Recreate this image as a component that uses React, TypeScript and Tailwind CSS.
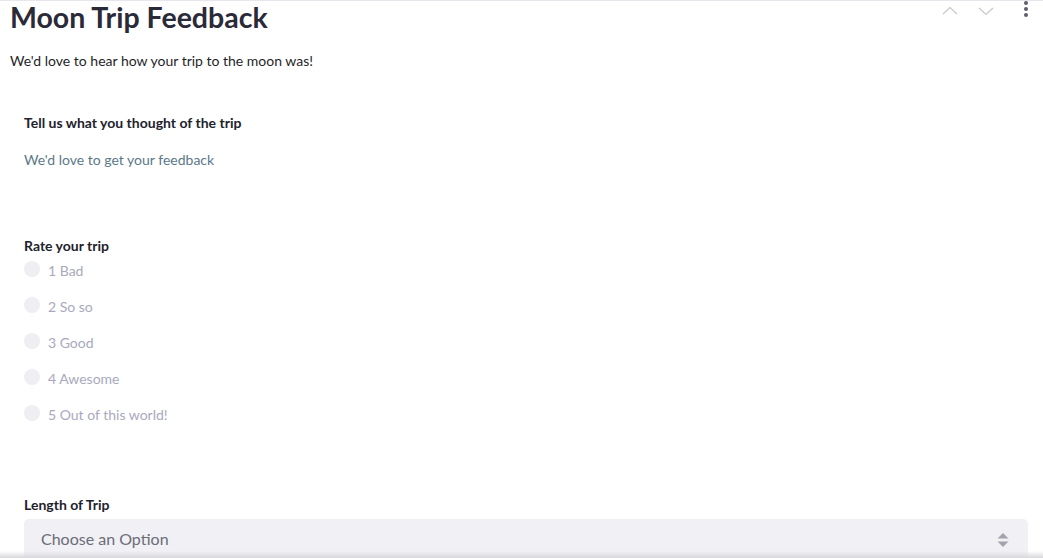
const ratings = ['1 Bad', '2 So so', '3 Good', '4 Awesome', '5 Out of this world!'];

export default function App() {
  return (
    <div
      className="relative h-[558px] w-[1043px] overflow-hidden bg-white border-t border-[#e6e6ec] text-[#262730]"
      style={{ fontFamily: 'Lato, "Open Sans", sans-serif' }}
    >
      {/* toolbar */}
      <div className="absolute right-0 top-0 flex items-start pr-[15px]">
        <svg width="16" height="10" viewBox="0 0 16 10" className="mt-[5px]" fill="none" stroke="#c8c8d0" strokeWidth="1.2">
          <path d="M1 8 L8 1.5 L15 8" />
        </svg>
        <svg width="16" height="10" viewBox="0 0 16 10" className="ml-[20px] mt-[5px]" fill="none" stroke="#c8c8d0" strokeWidth="1.2">
          <path d="M1 2 L8 8.5 L15 2" />
        </svg>
        <div className="ml-[30px] flex flex-col gap-[2px]">
          <span className="h-[4px] w-[4px] rounded-full bg-[#5e5e6c]" />
          <span className="h-[4px] w-[4px] rounded-full bg-[#5e5e6c]" />
          <span className="h-[4px] w-[4px] rounded-full bg-[#5e5e6c]" />
        </div>
      </div>

      <div className="px-[10px]">
        <h1 className="-mt-[4px] text-[28.5px] font-bold leading-[40px] text-[#2a2a38]">Moon Trip Feedback</h1>
        <p className="mt-[14px] text-[14px] leading-[20px] text-[#1f1f28]">
          We'd love to hear how your trip to the moon was!
        </p>
      </div>

      <form className="px-[24px] pt-[42px] pr-[15px]">
        <label className="block text-[14px] font-bold leading-[20px] text-[#22222c]">
          Tell us what you thought of the trip
        </label>
        <textarea
          placeholder="We'd love to get your feedback"
          className="mt-[17px] block h-[70px] w-full resize-none bg-transparent text-[14px] leading-[20px] text-[#5b7888] placeholder:text-[#5b7888] focus:outline-none"
        />

        <div className="mt-[16px] text-[14px] font-bold leading-[20px] text-[#22222c]">Rate your trip</div>
        <div className="mt-[4px] flex flex-col gap-[16px]">
          {ratings.map((r) => (
            <label key={r} className="flex h-[20px] items-center gap-[8px] text-[14px] text-[#a9a9bd]">
              <span className="h-[16px] w-[16px] -translate-y-[1px] rounded-full bg-[#eeeef3]" />
              <span>{r}</span>
            </label>
          ))}
        </div>

        <div className="mt-[71px] text-[14px] font-bold leading-[20px] text-[#22222c]">Length of Trip</div>
        <div className="mt-[4px] flex h-[44px] items-center justify-between rounded-[5px] bg-[#f0f0f5] pl-[17px] pr-[19px]">
          <span className="-mt-[4px] text-[16px] text-[#6c6c78]">Choose an Option</span>
          <svg width="12" height="16" viewBox="0 0 12 16" className="mt-[-2px]">
            <path d="M6 1 L11.5 6.5 H0.5 Z" fill="#a3a3ad" />
            <path d="M6 15 L11.5 9.5 H0.5 Z" fill="#a3a3ad" />
          </svg>
        </div>
      </form>

      {/* bottom shade */}
      <div className="pointer-events-none absolute bottom-0 left-0 right-0 h-[7px] bg-gradient-to-b from-transparent to-[#d8d8dc]" />
    </div>
  );
}
